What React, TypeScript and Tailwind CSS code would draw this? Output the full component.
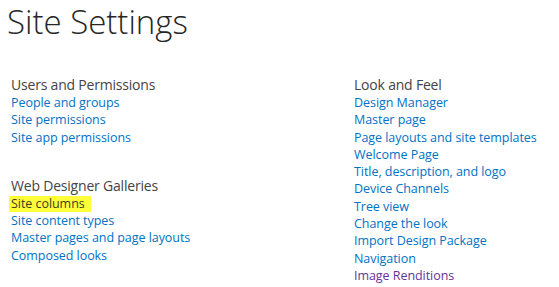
import React from 'react';

type Link = { label: string; visited?: boolean; highlight?: boolean };
type Section = { title: string; links: Link[] };

const left: Section[] = [
  {
    title: 'Users and Permissions',
    links: [{ label: 'People and groups' }, { label: 'Site permissions' }, { label: 'Site app permissions' }],
  },
  {
    title: 'Web Designer Galleries',
    links: [
      { label: 'Site columns', highlight: true },
      { label: 'Site content types' },
      { label: 'Master pages and page layouts' },
      { label: 'Composed looks' },
    ],
  },
];

const right: Section[] = [
  {
    title: 'Look and Feel',
    links: [
      { label: 'Design Manager' },
      { label: 'Master page' },
      { label: 'Page layouts and site templates' },
      { label: 'Welcome Page' },
      { label: 'Title, description, and logo' },
      { label: 'Device Channels' },
      { label: 'Tree view' },
      { label: 'Change the look' },
      { label: 'Import Design Package' },
      { label: 'Navigation' },
      { label: 'Image Renditions', visited: true },
    ],
  },
];

const SettingsSection = ({ section }: { section: Section }) => (
  <div>
    <h3 className="text-[14px] leading-[19px] tracking-[-0.2px] text-[#444] font-normal">{section.title}</h3>
    <ul>
      {section.links.map((l) => (
        <li key={l.label} className="text-[12.5px] leading-[17.3px] h-[17.3px] tracking-[-0.05px]">
          {l.highlight ? (
            <span className="inline-block bg-[#ffff3a] text-[#3b3b20] leading-[16px] pl-[2px] pr-[6px] -ml-[2px]">{l.label}</span>
          ) : (
            <a href="#" className={l.visited ? 'text-[#663399]' : 'text-[#0072c6]'}>
              {l.label}
            </a>
          )}
        </li>
      ))}
    </ul>
  </div>
);

export default function App() {
  return (
    <div className="w-[559px] h-[287px] bg-white overflow-hidden" style={{ fontFamily: '"Open Sans", "Noto Sans", sans-serif' }}>
      <h1 className="pl-[7px] text-[33px] leading-[44px] font-light text-[#262626]">Site Settings</h1>
      <div className="grid grid-cols-[343px_1fr] pl-[11px] mt-[31px]">
        <div className="flex flex-col gap-[30px]">
          {left.map((s) => (
            <SettingsSection key={s.title} section={s} />
          ))}
        </div>
        <div className="flex flex-col">
          {right.map((s) => (
            <SettingsSection key={s.title} section={s} />
          ))}
        </div>
      </div>
    </div>
  );
}
